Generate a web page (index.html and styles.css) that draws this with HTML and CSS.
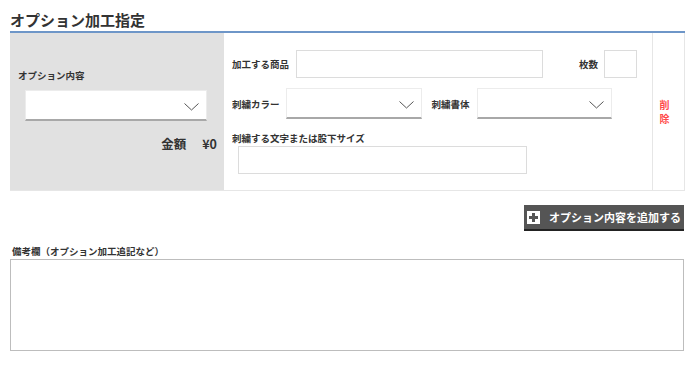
FILE: index.html
```html
<!DOCTYPE html>
<html lang="ja">
<head>
<meta charset="utf-8">
<title>オプション加工指定</title>
<link rel="stylesheet" href="styles.css">
</head>
<body>
<div class="wrap">
  <h2 class="title">オプション加工指定</h2>
  <div class="option-row">
    <div class="left-panel">
      <div class="label">オプション内容</div>
      <div class="select select-main">
        <svg class="chev" width="15" height="8" viewBox="0 0 15 8"><polyline points="0.5,0.5 7.5,7 14.5,0.5" fill="none" stroke="#555" stroke-width="1"/></svg>
      </div>
      <div class="price"><span>金額</span><span>¥0</span></div>
    </div>
    <div class="fields">
      <div class="frow">
        <span class="label">加工する商品</span>
        <div class="input input-product"></div>
        <span class="label label-qty">枚数</span>
        <div class="input input-qty"></div>
      </div>
      <div class="frow">
        <span class="label">刺繍カラー</span>
        <div class="select select-sm">
          <svg class="chev" width="15" height="8" viewBox="0 0 15 8"><polyline points="0.5,0.5 7.5,7 14.5,0.5" fill="none" stroke="#555" stroke-width="1"/></svg>
        </div>
        <span class="label label-font">刺繍書体</span>
        <div class="select select-sm select-font">
          <svg class="chev" width="15" height="8" viewBox="0 0 15 8"><polyline points="0.5,0.5 7.5,7 14.5,0.5" fill="none" stroke="#555" stroke-width="1"/></svg>
        </div>
      </div>
      <div class="label label-text">刺繍する文字または股下サイズ</div>
      <div class="input input-text"></div>
    </div>
    <div class="delete"><span>削</span><span>除</span></div>
  </div>
  <div class="btn-row">
    <div class="add-btn">
      <span class="plus"><svg width="13" height="13" viewBox="0 0 13 13"><rect x="5" y="2" width="3" height="9" fill="#555"/><rect x="2" y="5" width="9" height="3" fill="#555"/></svg></span>
      <span>オプション内容を追加する</span>
    </div>
  </div>
  <div class="label note-label">備考欄（オプション加工追記など）</div>
  <div class="textarea"></div>
</div>
</body>
</html>
```

FILE: styles.css
```css
* { box-sizing: border-box; }
body {
  margin: 0;
  background: #fff;
  font-family: "Noto Sans CJK JP", "Noto Sans", sans-serif;
  color: #333;
}
.wrap {
  width: 700px;
  padding: 0 15px 0 10px;
}
.title {
  margin: 0;
  font-size: 15px;
  font-weight: bold;
  line-height: 20px;
  padding-top: 10px;
  padding-bottom: 1px;
  border-bottom: 2px solid #6e96c8;
  color: #333;
}
.option-row {
  display: flex;
  height: 158px;
  border-bottom: 1px solid #e6e6e6;
  border-right: 1px solid #e6e6e6;
}
.left-panel {
  width: 214px;
  background: #e1e1e1;
  padding: 35px 7px 0 8px;
  display: flex;
  flex-direction: column;
}
.label {
  font-size: 9.5px;
  font-weight: bold;
  line-height: 14px;
  color: #333;
  white-space: nowrap;
}
.select {
  position: relative;
  background: #fff;
  border: 1px solid #ececec;
  border-bottom: 2px solid #a8a8a8;
  height: 31px;
}
.select .chev {
  position: absolute;
  right: 7px;
  top: 12px;
}
.select-main {
  margin-top: 8px;
  margin-left: 7px;
  width: 182px;
}
.price {
  margin-top: 14px;
  display: flex;
  justify-content: flex-end;
  gap: 16px;
  font-size: 12.5px;
  font-weight: bold;
  line-height: 18px;
}
.fields {
  flex: 1;
  padding: 17px 0 0 8px;
  display: flex;
  flex-direction: column;
}
.frow {
  display: flex;
  align-items: center;
  margin-bottom: 10px;
}
.input {
  background: #fff;
  border: 1px solid #dcdcdc;
  height: 28px;
}
.input-product {
  margin-left: 7px;
  width: 247px;
}
.label-qty {
  margin-left: 36px;
}
.input-qty {
  margin-left: 6px;
  width: 33px;
}
.select-sm {
  margin-left: 6px;
  width: 136px;
}
.label-font {
  margin-left: 10px;
}
.select-font {
  margin-left: 7px;
  width: 135px;
}
.label-text {
  margin-top: 2px;
}
.input-text {
  margin-top: 1px;
  margin-left: 6px;
  width: 289px;
}
.delete {
  width: 32px;
  border-left: 1px solid #e6e6e6;
  display: flex;
  flex-direction: column;
  justify-content: center;
  align-items: center;
  padding-right: 8px;
  color: #ff4a4a;
  font-size: 10px;
  line-height: 14px;
  font-weight: bold;
}
.btn-row {
  display: flex;
  justify-content: flex-end;
  margin-top: 14px;
}
.add-btn {
  display: flex;
  align-items: center;
  width: 160px;
  height: 26px;
  background: #555;
  border-bottom: 2px solid #222;
  color: #fff;
  font-size: 11px;
  font-weight: bold;
  padding-left: 3px;
  gap: 9px;
  margin-right: 1px;
}
.plus {
  display: flex;
  width: 13px;
  height: 13px;
  background: #fff;
}
.note-label {
  margin-top: 13px;
  padding-left: 2px;
}
.textarea {
  margin-top: 1px;
  height: 92px;
  border: 1px solid #bdbdbd;
  margin-right: 1px;
}
```
